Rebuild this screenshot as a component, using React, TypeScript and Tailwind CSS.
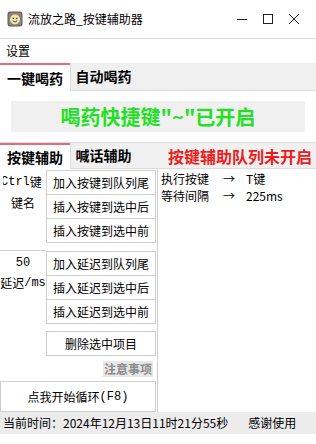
import React from "react";

const font = { fontFamily: '"Noto Sans CJK SC", "Noto Sans", sans-serif' };
const mono = { fontFamily: '"Liberation Mono", "DejaVu Sans Mono", monospace' };

function Btn({ children, first }: { children: React.ReactNode; first?: boolean }) {
  return (
    <div
      className={`h-[25px] w-[110px] border border-[#cfcfcf] bg-white flex items-center justify-center text-[12px] text-black ${first ? "" : "-mt-px"}`}
    >
      {children}
    </div>
  );
}

export default function App() {
  return (
    <div className="w-[316px] h-[444px] bg-white overflow-hidden text-black" style={font}>
      {/* title bar */}
      <div className="h-[39px] flex items-center border-b border-[#dcdcdc]">
        <svg width="16" height="16" viewBox="0 0 16 16" className="ml-[7px]">
          <rect x="0.5" y="0.5" width="15" height="15" rx="3" fill="#5d5b6e" />
          <rect x="1.5" y="1.5" width="13" height="13" rx="2.5" fill="#8c8468" />
          <circle cx="8" cy="8.5" r="5" fill="#efe2b0" />
          <circle cx="6.3" cy="7.5" r="0.8" fill="#4a3f2a" />
          <circle cx="9.7" cy="7.5" r="0.8" fill="#4a3f2a" />
          <path d="M5.8 10 Q8 11.8 10.2 10" stroke="#4a3f2a" strokeWidth="0.9" fill="none" />
        </svg>
        <span className="ml-[5px] text-[12px]">流放之路_按键辅助器</span>
        <div className="ml-auto flex items-center">
          <svg width="12" height="12" viewBox="0 0 12 12" className="mr-[14px]">
            <line x1="1" y1="6.5" x2="11" y2="6.5" stroke="#222" strokeWidth="1" />
          </svg>
          <svg width="12" height="12" viewBox="0 0 12 12" className="mr-[14px]">
            <rect x="1.5" y="1.5" width="9" height="9" stroke="#222" strokeWidth="1" fill="none" />
          </svg>
          <svg width="12" height="12" viewBox="0 0 12 12" className="mr-[16px]">
            <path d="M1 1 L11 11 M11 1 L1 11" stroke="#222" strokeWidth="1" />
          </svg>
        </div>
      </div>
      {/* menu */}
      <div className="h-[24px] flex items-center px-[6px] text-[12px]">设置</div>
      {/* tab strip 1 */}
      <div className="h-[28px] flex bg-[#f0f0f0] border-b border-[#dcdcdc]">
        <div className="w-[70px] h-[28px] bg-white border-t-2 border-[#e66a7b] flex items-center justify-center text-[14px] font-bold">
          一键喝药
        </div>
        <div className="w-[66px] border-l border-[#dcdcdc] flex items-center justify-center text-[14px] font-bold">
          自动喝药
        </div>
      </div>
      {/* panel 1 */}
      <div className="h-[52px] px-[11px] pt-[10px] border-b border-[#dcdcdc]">
        <div className="h-[31px] bg-[#f0f0f0] flex items-center justify-center text-[20px] font-bold text-[#22e022] leading-none">
          喝药快捷键"~"已开启
        </div>
      </div>
      {/* tab strip 2 */}
      <div className="h-[26px] flex bg-[#f0f0f0] border-b border-[#dcdcdc]">
        <div className="w-[70px] h-[26px] bg-white border-t-2 border-[#e66a7b] flex items-center justify-center text-[14px] font-bold">
          按键辅助
        </div>
        <div className="w-[66px] border-l border-[#dcdcdc] flex items-center justify-center text-[14px] font-bold">
          喊话辅助
        </div>
        <div className="ml-auto pr-[4px] flex items-center text-[16px] font-bold text-[#ee1c1c]">
          按键辅助队列未开启
        </div>
      </div>
      {/* content */}
      <div className="h-[243px] flex">
        <div className="w-[157px] flex flex-col pt-px">
          <div className="flex">
            <div className="w-[46px] flex flex-col">
              <div className="h-[24px] ml-[3px] overflow-hidden flex items-center text-[12px] whitespace-nowrap">
                <span className="-ml-[2px]" style={mono}>Ctrl</span>
                <span>键</span>
              </div>
              <div className="h-[18px] flex items-center justify-center text-[12px]">键名</div>
            </div>
            <div className="flex flex-col">
              <Btn first>加入按键到队列尾</Btn>
              <Btn>插入按键到选中后</Btn>
              <Btn>插入按键到选中前</Btn>
            </div>
          </div>
          <div className="flex mt-[7px]">
            <div className="w-[46px] flex flex-col">
              <div className="h-[24px] border-t border-[#cfcfcf] flex items-center justify-center text-[12px]" style={mono}>
                50
              </div>
              <div className="h-[18px] flex items-center justify-center text-[12px] whitespace-nowrap">
                延迟<span style={mono}>/ms</span>
              </div>
            </div>
            <div className="flex flex-col mt-px">
              <Btn first>加入延迟到队列尾</Btn>
              <Btn>插入延迟到选中后</Btn>
              <Btn>插入延迟到选中前</Btn>
              <div className="mt-[7px]">
                <Btn first>删除选中项目</Btn>
              </div>
            </div>
          </div>
          <div className="mt-[5px] h-[16px] flex justify-end pr-[4px]">
            <span className="bg-[#e8e8e8] text-[#8a8a8a] text-[12px] font-bold px-px leading-[16px]">注意事项</span>
          </div>
          <div className="mt-[4px] h-[31px] w-[156px] border border-[#cfcfcf] bg-white flex items-center justify-center text-[12px]">
            点我开始循环<span style={mono}>(F8)</span>
          </div>
        </div>
        <div className="flex-1 border-l border-[#cfcfcf] pt-[1px] pl-[3px] text-[12px] leading-[17px]">
          <div className="flex">
            <span className="w-[62px]">执行按键</span>
            <span className="w-[23px]">→</span>
            <span>T键</span>
          </div>
          <div className="flex">
            <span className="w-[62px]">等待间隔</span>
            <span className="w-[23px]">→</span>
            <span>225ms</span>
          </div>
        </div>
      </div>
      {/* status bar */}
      <div className="h-[22px] bg-[#ececec] flex items-center px-[3px] text-[12px] whitespace-nowrap">
        <span>当前时间：2024年12月13日11时21分55秒</span>
        <span className="ml-[20px]">感谢使用</span>
      </div>
    </div>
  );
}
